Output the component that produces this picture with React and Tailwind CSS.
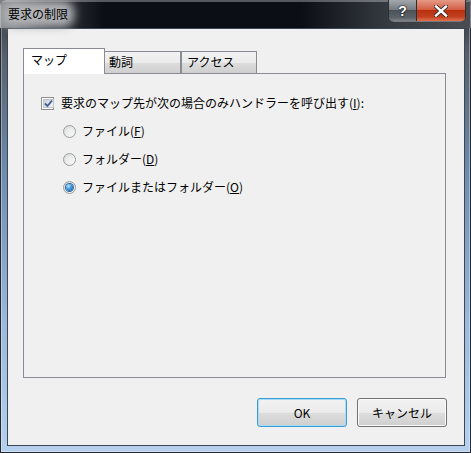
import React from 'react';

function Check() {
  return (
    <span className="w-[13px] h-[13px] border border-[#8e8f8f] bg-white p-[1px] flex">
      <span className="flex-1 bg-[linear-gradient(135deg,#cbd0d6,#f4f5f6)] border border-[#c0c4ca] flex items-center justify-center">
        <svg width="9" height="9" viewBox="0 0 9 9">
          <path d="M1 4.5 L3.5 7 L8 1.5" fill="none" stroke="#3f5a8f" strokeWidth="1.8" />
        </svg>
      </span>
    </span>
  );
}

function Radio({ on }) {
  return (
    <span className="w-[13px] h-[13px] rounded-full border border-[#9a9b9c] bg-[linear-gradient(135deg,#d6d8da,#fbfbfb)] flex items-center justify-center">
      {on ? (
        <span className="w-[7px] h-[7px] rounded-full bg-[radial-gradient(circle_at_35%_30%,#b8e2ff_0%,#3f97dc_45%,#16548f_100%)] shadow-[0_0_0_1px_#2c6aa3]"></span>
      ) : (
        <span className="w-[7px] h-[7px] rounded-full bg-[linear-gradient(135deg,#e4e5e6,#f7f7f7)]"></span>
      )}
    </span>
  );
}

export default function App() {
  return (
    <div className="w-[471px] h-[453px] bg-[#7d8085] font-['Noto_Sans_CJK_JP','Noto_Sans',sans-serif] text-[12px] text-black">
      <div className="w-full h-full relative flex flex-col rounded-t-[6px] overflow-hidden bg-[linear-gradient(180deg,#2c3036_0%,#56606c_12%,#6f8fb3_40%,#9bbadd_72%,#b5d1ee_100%)] shadow-[inset_0_0_0_1px_#262a30,inset_0_0_0_2px_rgba(255,255,255,0.35)]">
        {/* title bar */}
        <div className="h-[28px] flex items-center pl-[8px] bg-[linear-gradient(90deg,#8c8f93_0%,#3a3e44_10%,#0b0f15_22%,#0b0f15_64%,#353a40_82%,#4a4e53_100%)] shadow-[inset_0_1px_0_1px_rgba(255,255,255,0.3)]">
          <span className="relative">
            <span className="absolute -inset-x-[6px] -inset-y-[4px] rounded-[10px] bg-[#b2b4b7] blur-[5px]"></span>
            <span className="relative leading-none">要求の制限</span>
          </span>
        </div>

        <div className="absolute top-0 right-[6px] flex h-[21px] rounded-b-[5px] shadow-[0_1px_0_0_rgba(255,255,255,0.35),0_0_0_1px_#2b2e33]">
          <div className="w-[28px] rounded-bl-[4px] bg-[linear-gradient(180deg,#a3a8ad_0%,#767c82_45%,#4c5258_50%,#5b6268_85%,#7d848a_100%)] flex items-center justify-center text-white font-bold text-[14px] leading-none [text-shadow:0_0_2px_#000,0_0_1px_#000] font-['Liberation_Sans',sans-serif] border-r border-[#2b2e33]">
            ?
          </div>
          <div className="w-[48px] rounded-br-[4px] bg-[linear-gradient(180deg,#e59a88_0%,#d45f45_45%,#b9300f_50%,#c2401f_80%,#e0734f_100%)] flex items-center justify-center">
            <svg width="14" height="12" viewBox="0 0 14 12">
              <path d="M2 1.5 L12 10.5 M12 1.5 L2 10.5" stroke="#3a2a26" strokeWidth="4.2" strokeLinecap="square" />
              <path d="M2 1.5 L12 10.5 M12 1.5 L2 10.5" stroke="#ffffff" strokeWidth="2.4" strokeLinecap="square" />
            </svg>
          </div>
        </div>

        {/* client */}
        <div className="flex-1 flex pl-[7px] pr-[6px] pb-[7px]">
          <div className="flex-1 border border-[#3e4652] bg-[#f0f0f0] flex flex-col">
            {/* tabs */}
            <div className="ml-[15px] mt-[19px] h-[26px] -mb-[1px] flex items-end">
              <div className="relative z-10 w-[82px] h-[26px] bg-white border border-b-0 border-[#898c95] pl-[7px] pt-[3px] leading-[16px]">
                マップ
              </div>
              <div className="w-[77px] h-[22px] mb-[1px] -ml-[1px] border border-b-0 border-[#898c95] bg-[linear-gradient(180deg,#f2f2f2_0%,#ebebeb_50%,#dddddd_51%,#cfcfcf_100%)] pl-[4px] pt-[2px] leading-[16px]">
                動詞
              </div>
              <div className="w-[76px] h-[22px] mb-[1px] border border-b-0 border-[#898c95] bg-[linear-gradient(180deg,#f2f2f2_0%,#ebebeb_50%,#dddddd_51%,#cfcfcf_100%)] pl-[5px] pt-[2px] leading-[16px]">
                アクセス
              </div>
            </div>

            {/* panel */}
            <div className="ml-[15px] w-[423px] h-[305px] border border-[#898c95] bg-[#f0f0f0] pt-[19px] flex flex-col gap-[8px]">
              <div className="h-[20px] pl-[17px] flex items-center gap-[7px]">
                <Check />
                <span>要求のマップ先が次の場合のみハンドラーを呼び出す(<u>I</u>):</span>
              </div>
              <div className="h-[20px] pl-[39px] flex items-center gap-[6px]">
                <Radio />
                <span>ファイル(<u>F</u>)</span>
              </div>
              <div className="h-[20px] pl-[39px] flex items-center gap-[6px]">
                <Radio />
                <span>フォルダー(<u>D</u>)</span>
              </div>
              <div className="h-[20px] pl-[39px] flex items-center gap-[6px]">
                <Radio on />
                <span>ファイルまたはフォルダー(<u>O</u>)</span>
              </div>
            </div>

            {/* buttons */}
            <div className="mt-[20px] pr-[17px] flex justify-end gap-[10px]">
              <button className="w-[90px] h-[29px] rounded-[3px] border border-[#3c9ad6] bg-[linear-gradient(180deg,#f2f2f2_0%,#ebebeb_50%,#dddddd_51%,#cfcfcf_100%)] shadow-[inset_0_0_0_1px_#a7dcf6] flex items-center justify-center">
                OK
              </button>
              <button className="w-[90px] h-[29px] rounded-[3px] border border-[#707070] bg-[linear-gradient(180deg,#f2f2f2_0%,#ebebeb_50%,#dddddd_51%,#cfcfcf_100%)] shadow-[inset_0_0_0_1px_#fcfcfc] flex items-center justify-center">
                キャンセル
              </button>
            </div>
          </div>
        </div>
      </div>
    </div>
  );
}
